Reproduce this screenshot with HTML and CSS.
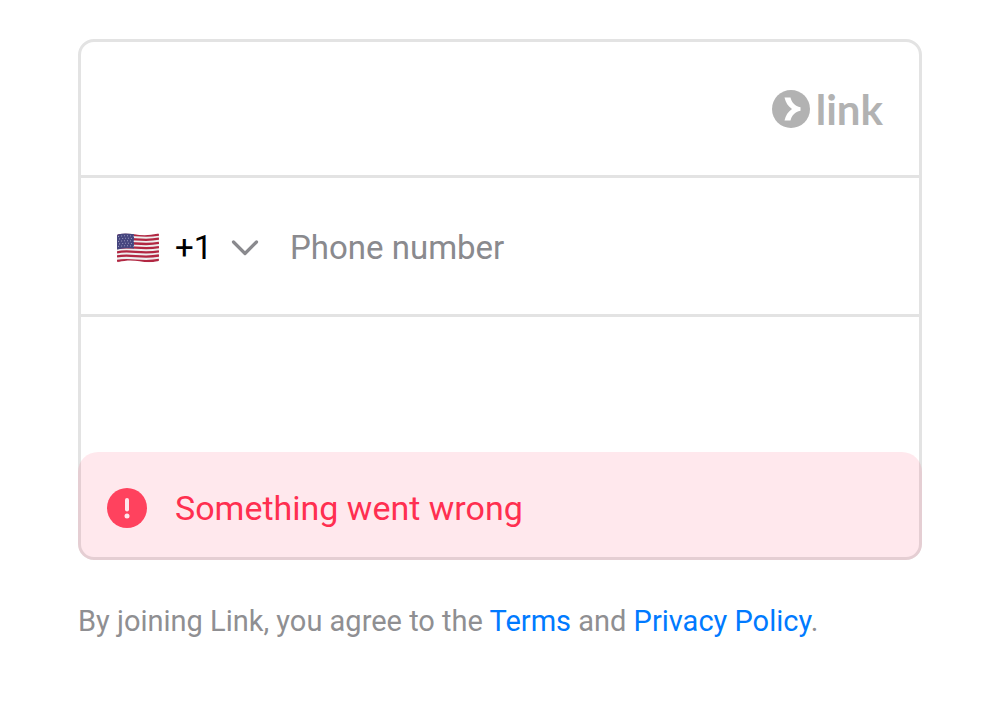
FILE: index.html
```html
<!DOCTYPE html>
<html lang="en">
<head>
<meta charset="utf-8">
<meta name="viewport" content="width=device-width, initial-scale=1">
<title>Link</title>
<link rel="stylesheet" href="styles.css">
</head>
<body>
<main class="page">
  <form class="card">
    <div class="row email-row">
      <input class="field" type="email" aria-label="Email">
      <div class="brand">
        <svg class="brand-mark" viewBox="0 0 38 38" aria-hidden="true">
          <circle cx="19" cy="19" r="19" fill="#b2b2b2"/>
          <path d="M12.500 7.500H18.500C19.600 12.500 23 16.200 28.500 17.300V20.700C23 21.800 19.600 25.500 18.500 30.500H12.500C13.600 25.500 16.200 21.500 20 19C16.200 16.500 13.600 12.500 12.500 7.500Z" fill="#fff"/>
        </svg>
        <span class="brand-name">link</span>
      </div>
    </div>
    <div class="row phone-row">
      <svg class="flag" viewBox="0 0 42 30" aria-hidden="true">
        <defs>
          <clipPath id="wave"><path d="M0 3Q0 1.500 1.500 1.200C14-1.500 22 5 41 .6Q42 .4 42 2V27Q42 28.200 40.500 28.500C25 31.500 18 24.500 1 29.400Q0 29.700 0 28Z"/></clipPath>
        </defs>
        <g clip-path="url(#wave)">
          <path d="M0 0H42V30H0Z" fill="#eee"/>
          <g fill="none" stroke="#b22742" stroke-width="2.300">
            <path d="M0 2.500C14-.5 24 5 42 1.500"/>
            <path d="M0 6.700C14 3.700 24 9.200 42 5.700"/>
            <path d="M0 10.900C14 7.900 24 13.400 42 9.900"/>
            <path d="M0 15.100C14 12.100 24 17.600 42 14.100"/>
            <path d="M0 19.300C14 16.300 24 21.800 42 18.300"/>
            <path d="M0 23.500C14 20.500 24 26 42 22.500"/>
            <path d="M0 28C14 25 24 30.500 42 27"/>
          </g>
          <path d="M0 0H17V15.500C11 14.800 6 15.200 0 16.500Z" fill="#46467f"/>
          <g fill="none" stroke="#9c9cbf" stroke-width="1" stroke-dasharray="1 2">
            <path d="M1 3.500C7 2.500 12 2.500 17 3.300M2 6C8 5 12 5 17 5.800M1 8.500C7 7.500 12 7.500 17 8.300M2 11C8 10 12 10 17 10.800M1 13.500C7 12.500 12 12.500 17 13.300"/>
          </g>
        </g>
      </svg>
      <div class="code">
        <select class="code-select" aria-label="Country code"><option>+1</option></select>
        <svg class="chevron" viewBox="0 0 28 18" aria-hidden="true"><path d="M2.500 3L14 14.500L25.500 3" fill="none" stroke="#8a8a8e" stroke-width="3.200" stroke-linecap="round" stroke-linejoin="round"/></svg>
      </div>
      <input class="field" type="tel" aria-label="Phone number" placeholder="Phone number">
    </div>
    <div class="row name-row">
      <input class="field" type="text" aria-label="Full name">
    </div>
    <div class="error" role="alert">
      <svg class="error-icon" viewBox="0 0 40 40" aria-hidden="true">
        <circle cx="20" cy="20" r="20" fill="#ff425e"/>
        <path d="M20 12V21.500" stroke="#ffe6ec" stroke-width="4" stroke-linecap="round"/>
        <circle cx="20" cy="28" r="2.500" fill="#ffe6ec"/>
      </svg>
      <span>Something went wrong</span>
    </div>
  </form>
  <p class="legal">By joining Link, you agree to the <a href="#terms">Terms</a> and <a href="#privacy">Privacy Policy</a>.</p>
</main>
</body>
</html>
```
FILE: styles.css
```css
* {
  box-sizing: border-box;
}

body {
  margin: 0;
  background: #fff;
  font-family: Roboto, sans-serif;
}

.page {
  padding: 39px 78px;
}

.card {
  border: 3px solid #e3e3e3;
  border-radius: 16px;
}

.row {
  display: flex;
  align-items: center;
  height: 133px;
  padding: 0 36px;
}

.row + .row {
  height: 139px;
  padding-top: 3px;
  border-top: 3px solid #e3e3e3;
}

.field {
  flex: 1;
  min-width: 0;
  padding: 0;
  border: 0;
  outline: 0;
  background: none;
  color: #000;
  font: 33px/40px Roboto, sans-serif;
}

.field::placeholder {
  color: #8a8a8e;
  opacity: 1;
}

.brand {
  display: flex;
  align-items: center;
  gap: 6px;
  color: #b2b2b2;
}

.brand-mark {
  width: 38px;
  height: 38px;
}

.brand-name {
  font: bold 42px/40px Lato, sans-serif;
}

.flag {
  width: 42px;
  height: 30px;
  margin-right: 16px;
}

.code {
  display: grid;
  align-items: center;
  width: 84px;
  margin-right: 31px;
}

.code-select {
  grid-area: 1 / 1;
  width: 100%;
  padding: 0;
  border: 0;
  appearance: none;
  background: none;
  color: #000;
  font: 33px/40px Roboto, sans-serif;
}

.chevron {
  grid-area: 1 / 1;
  justify-self: end;
  width: 28px;
  height: 18px;
  pointer-events: none;
}

.error {
  display: flex;
  align-items: center;
  gap: 28px;
  margin: -1px -3px -3px;
  padding: 34px 29px 27px;
  border: 0 solid transparent;
  border-bottom-width: 3px;
  border-radius: 20px 20px 16px 16px;
  background: rgb(255 0 60 / 9%);
  color: #ff2f50;
  font-size: 34px;
  line-height: 44px;
}

.error-icon {
  width: 40px;
  height: 40px;
}

.legal {
  margin: 42px 0 0;
  color: #8f8f92;
  font-size: 29px;
  line-height: 38px;
}

.legal a {
  color: #007aff;
  text-decoration: none;
}
```
